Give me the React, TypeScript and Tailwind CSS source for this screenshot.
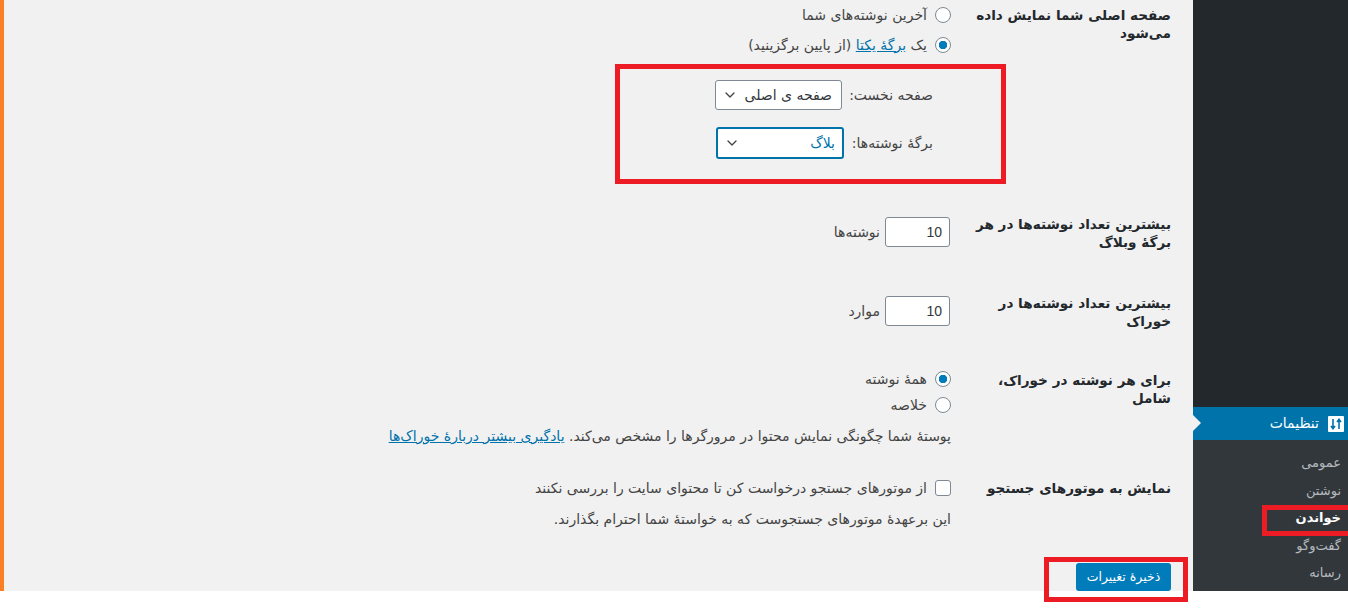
import { ChevronDown } from 'lucide-react';

const Radio = ({ checked = false }: { checked?: boolean }) => (
  <input
    type="radio"
    readOnly
    checked={checked}
    className="appearance-none w-4 h-4 shrink-0 rounded-full border border-[#7e8993] bg-white checked:bg-[radial-gradient(circle,#007cba_0,#007cba_4px,#ffffff_4.5px)]"
  />
);

const SelectBox = ({ text, focused = false }: { text: string; focused?: boolean }) => (
  <div
    className={
      focused
        ? 'flex items-center justify-between w-[128px] h-[32px] pr-[7px] pl-[6px] bg-white rounded-[3px] border-2 border-[#0073aa] text-[#0073aa]'
        : 'flex items-center justify-between w-[127px] h-[30px] pr-[9px] pl-[6px] bg-white rounded-[3px] border border-[#7e8993] text-[#32373c]'
    }
  >
    <span>{text}</span>
    <ChevronDown className="w-4 h-4 text-[#444444]" strokeWidth={2} />
  </div>
);

const RowLabel = ({ text }: { text: string }) => (
  <div className="w-[200px] me-[20px] font-bold text-[13.6px] text-[#23282d] leading-[18px]">{text}</div>
);

const NumberRow = ({ label, unit, className }: { label: string; unit: string; className: string }) => (
  <div className={`flex ${className}`}>
    <RowLabel text={label} />
    <div className="flex items-center gap-[5px] h-[30px] mt-[2px] mr-[1px]">
      <input
        type="text"
        readOnly
        value="10"
        dir="ltr"
        className="w-[65px] h-[30px] px-[7px] text-right bg-white rounded-[3px] border border-[#7e8993] text-[#32373c] text-[14px] font-['Liberation_Sans',sans-serif]"
      />
      <span>{unit}</span>
    </div>
  </div>
);

const SubItem = ({ text, active = false }: { text: string; active?: boolean }) => (
  <div className={active ? 'h-[27.5px] flex items-center font-bold text-white' : 'h-[27.5px] flex items-center text-[#b4b9be]'}>
    {text}
  </div>
);

export default function App() {
  return (
    <div dir="rtl" className="relative w-[1348px] h-[616px] overflow-hidden bg-white font-['DejaVu_Sans',sans-serif] text-[14px] text-[#444444]">
      <div className="flex h-[591px]">
        {/* Admin sidebar */}
        <aside className="w-[155px] flex flex-col bg-[#23282d]">
          <div className="relative mt-[407px] h-[33px] flex items-center gap-[9px] pr-[4px] bg-[#0073aa] text-white text-[14px]">
            <svg viewBox="0 0 16 16" className="w-4 h-4 shrink-0">
              <rect x="0" y="0" width="16" height="16" rx="1" fill="#ffffff" />
              <path d="M5 3v9M3 10l2 2.6L7 10M11 13V4M9 6l2-2.6L13 6" stroke="#0073aa" strokeWidth="1.6" fill="none" />
            </svg>
            <span>تنظیمات</span>
            <span className="absolute left-0 top-[8px] border-y-[8px] border-y-transparent border-l-[8px] border-l-[#f1f1f1]" />
          </div>
          <div className="flex-1 bg-[#32373c] pt-[9px] pr-[7px] text-[13px]">
            <SubItem text="عمومی" />
            <SubItem text="نوشتن" />
            <SubItem text="خواندن" active />
            <SubItem text="گفت‌وگو" />
            <SubItem text="رسانه" />
          </div>
        </aside>

        {/* Settings form */}
        <main className="flex-1 bg-[#f1f1f1] pr-[22px]">
          <div className="flex">
            <div className="pt-[6px]">
              <RowLabel text="صفحه اصلی شما نمایش داده می‌شود" />
            </div>
            <div className="pt-[7px]">
              <label className="flex items-center gap-[8px] h-[16px]">
                <Radio />
                آخرین نوشته‌های شما
              </label>
              <label className="flex items-center gap-[8px] h-[16px] mt-[14px]">
                <Radio checked />
                <span>
                  یک <a className="text-[#0073aa] underline">برگهٔ یکتا</a> (از پایین برگزینید)
                </span>
              </label>
              <div className="flex items-center gap-[6px] mt-[27px] pr-[18px]">
                <span className="w-[85px]">صفحه نخست:</span>
                <SelectBox text="صفحه ی اصلی" />
              </div>
              <div className="flex items-center gap-[6px] mt-[17px] pr-[18px]">
                <span className="w-[83px]">برگهٔ نوشته‌ها:</span>
                <SelectBox text="بلاگ" focused />
              </div>
            </div>
          </div>

          <NumberRow className="mt-[56px]" label="بیشترین تعداد نوشته‌ها در هر برگهٔ وبلاگ" unit="نوشته‌ها" />
          <NumberRow className="mt-[43px]" label="بیشترین تعداد نوشته‌ها در خوراک" unit="موارد" />

          <div className="flex mt-[41px]">
            <RowLabel text="برای هر نوشته در خوراک، شامل" />
            <div>
              <label className="flex items-center gap-[8px] h-[16px]">
                <Radio checked />
                همهٔ نوشته
              </label>
              <label className="flex items-center gap-[8px] h-[16px] mt-[10px]">
                <Radio />
                خلاصه
              </label>
              <p className="mt-[14px] leading-[18px]">
                پوستهٔ شما چگونگی نمایش محتوا در مرورگرها را مشخص می‌کند.{' '}
                <a className="text-[#0073aa] underline">یادگیری بیشتر دربارهٔ خوراک‌ها</a>
              </p>
            </div>
          </div>

          <div className="flex mt-[34px]">
            <RowLabel text="نمایش به موتورهای جستجو" />
            <div>
              <label className="flex items-center gap-[8px] h-[16px] mt-[1px]">
                <input type="checkbox" readOnly className="appearance-none w-4 h-4 shrink-0 rounded-[3px] border border-[#7e8993] bg-white" />
                از موتورهای جستجو درخواست کن تا محتوای سایت را بررسی نکنند
              </label>
              <p className="mt-[14px] leading-[18px]">این برعهدهٔ موتورهای جستجوست که به خواستهٔ شما احترام بگذارند.</p>
            </div>
          </div>

          <button className="block mt-[35px] w-[95px] h-[28px] rounded-[3px] bg-[#007cba] text-white text-[12.5px]">ذخیرهٔ تغییرات</button>
        </main>

        <div className="w-[4px] bg-[#fb7f24]" />
      </div>

      {/* Red annotation boxes drawn over the screenshot */}
      <div className="absolute left-[615px] top-[64px] w-[391px] h-[120px] border-[5px] border-[#ed1c24]" />
      <div className="absolute left-[1262px] top-[505px] w-[86px] h-[31px] border-[5px] border-r-0 border-[#ed1c24]" />
      <div className="absolute left-[1044px] top-[557px] w-[144px] h-[45px] border-[5px] border-[#ed1c24]" />
    </div>
  );
}
